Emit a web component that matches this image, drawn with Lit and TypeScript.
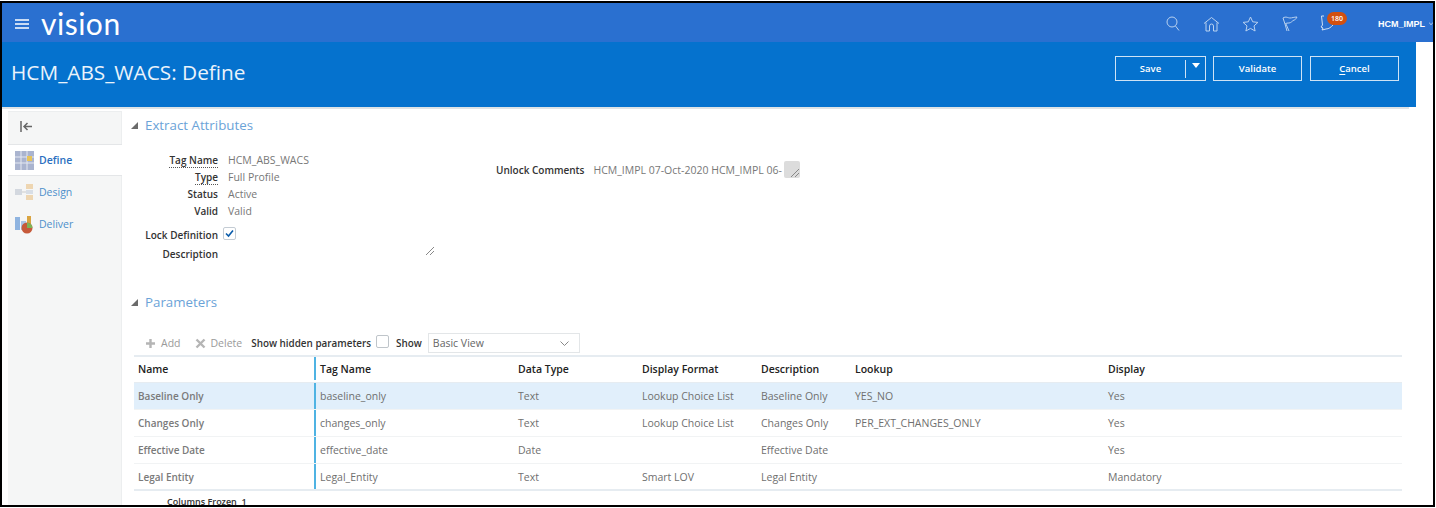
import { LitElement, css, html, svg, unsafeCSS } from 'lit'
import { customElement } from 'lit/decorators.js'

const FONT = unsafeCSS('"Open Sans", "Noto Sans", sans-serif')

const columns = [
  { label: 'Name', key: 'name' },
  { label: 'Tag Name', key: 'tag' },
  { label: 'Data Type', key: 'type' },
  { label: 'Display Format', key: 'format' },
  { label: 'Description', key: 'desc' },
  { label: 'Lookup', key: 'lookup' },
  { label: 'Display', key: 'display' }
]

const rows: Record<string, string>[] = [
  { name: 'Baseline Only', tag: 'baseline_only', type: 'Text', format: 'Lookup Choice List', desc: 'Baseline Only', lookup: 'YES_NO', display: 'Yes' },
  { name: 'Changes Only', tag: 'changes_only', type: 'Text', format: 'Lookup Choice List', desc: 'Changes Only', lookup: 'PER_EXT_CHANGES_ONLY', display: 'Yes' },
  { name: 'Effective Date', tag: 'effective_date', type: 'Date', format: '', desc: 'Effective Date', lookup: '', display: 'Yes' },
  { name: 'Legal Entity', tag: 'Legal_Entity', type: 'Text', format: 'Smart LOV', desc: 'Legal Entity', lookup: '', display: 'Mandatory' }
]

const attrs = [
  { label: 'Tag Name', value: 'HCM_ABS_WACS', dotted: true },
  { label: 'Type', value: 'Full Profile', dotted: true },
  { label: 'Status', value: 'Active', dotted: false },
  { label: 'Valid', value: 'Valid', dotted: false }
]

const grip = svg`<path d="M0 8 8 0M4 8 8 4" stroke="#888" stroke-width="1" fill="none"/>`

@customElement('app-root')
export class AppRoot extends LitElement {
  static styles = css`
    :host {
      display: block;
      width: 1436px;
      height: 508px;
      overflow: hidden;
      background: #fff;
      font-family: ${FONT};
      font-size: 10.5px;
    }
    .frame {
      box-sizing: border-box;
      width: 1435px;
      height: 506px;
      margin-top: 1px;
      overflow: hidden;
      border: 2px solid #000;
      background: #fff;
    }
    .topbar {
      height: 39px;
      background: #2a70d0;
      display: flex;
      align-items: center;
      color: #fff;
      box-sizing: border-box;
      padding-left: 13px;
    }
    .menu { width: 14px; height: 12px; margin-top: 2px; }
    .logo {
      font-size: 30px;
      line-height: 39px;
      margin: 1px 0 0 12px;
      letter-spacing: 0.5px;
      font-family: Lato, sans-serif;
      font-weight: 400;
    }
    .top-icons {
      margin-left: auto;
      display: flex;
      align-items: center;
      padding-top: 2px;
    }
    .top-icons svg { display: block; }
    .notify { position: relative; }
    .badge {
      position: absolute;
      left: 7px;
      top: -3px;
      width: 20px;
      height: 13px;
      border-radius: 7px;
      background: #d2500f;
      color: #fff;
      font-size: 7px;
      font-weight: 600;
      line-height: 13px;
      text-align: center;
    }
    .user {
      font-size: 9px;
      font-weight: 700;
      font-family: "Liberation Sans", sans-serif;
      margin: 1px 0 0 41px;
      display: flex;
      align-items: center;
      width: 55px;
      gap: 4px;
      white-space: nowrap;
    }
    .band {
      width: 1414px;
      height: 65px;
      background: #0572ce;
      display: flex;
      align-items: flex-start;
      box-sizing: border-box;
      padding: 15px 17px 0 9px;
      color: #fff;
    }
    .band h1 {
      margin: 0;
      font-size: 20.8px;
      line-height: 31px;
      font-weight: 400;
      color: #eaf3fb;
    }
    .actions { margin: -1px 0 0 auto; display: flex; gap: 8px; }
    .btn {
      box-sizing: border-box;
      height: 25px;
      border: 1px solid #cfe3f5;
      color: #fff;
      font-size: 9.5px;
      font-weight: 600;
      display: flex;
      align-items: center;
      justify-content: center;
      width: 89px;
    }
    .btn u { text-underline-offset: 2px; }
    .split { width: 91px; justify-content: flex-start; margin-right: -1px; }
    .split .label-part { width: 69px; text-align: center; }
    .split .arrow {
      flex: 1;
      height: 18px;
      border-left: 1px solid #cfe3f5;
      display: flex;
      align-items: flex-start;
      justify-content: center;
      padding-top: 3px;
      box-sizing: border-box;
    }
    .tri {
      width: 0;
      height: 0;
      border: 4px solid transparent;
      border-top: 5px solid #fff;
      border-bottom: 0;
    }
    .body {
      display: flex;
      height: 400px;
      padding-left: 6px;
      padding-top: 2px;
      border-top: 2px solid #dfe3e6;
      width: 1407px;
      box-sizing: border-box;
    }
    .side {
      width: 114px;
      flex: none;
      background: #f5f6f6;
      border-top: 1px solid #eceeef;
      border-right: 1px solid #eceeef;
      box-sizing: border-box;
    }
    .collapse {
      height: 32px;
      display: flex;
      align-items: center;
      padding: 0 0 3px 12px;
      box-sizing: border-box;
    }
    .nav {
      height: 32px;
      display: flex;
      align-items: center;
      gap: 5px;
      padding-left: 7px;
      color: #4d8fcb;
      font-size: 10.5px;
    }
    .nav.active {
      background: #fff;
      color: #2a6fc0;
      font-weight: 600;
      border-top: 1px solid #e4e6e8;
      border-bottom: 1px solid #e4e6e8;
      box-sizing: border-box;
      width: 114px;
    }
    .content {
      flex: 1;
      min-width: 0;
      padding-left: 9px;
      box-sizing: border-box;
      color: #333;
    }
    .section {
      display: flex;
      align-items: center;
      gap: 6px;
      color: #6ba3d8;
      font-size: 13.3px;
      height: 20px;
      font-weight: 400;
    }
    .section.first { margin-top: 4px; }
    .caret {
      width: 0;
      height: 0;
      margin-right: 1px;
      border-style: solid;
      border-width: 0 0 7px 7px;
      border-color: transparent transparent #6b6b6b transparent;
    }
    .attrs {
      display: flex;
      height: 157px;
    }
    .form {
      width: 306px;
      padding-top: 16px;
      position: relative;
      flex: none;
    }
    .row {
      display: flex;
      height: 17px;
      align-items: center;
    }
    .label {
      width: 87px;
      text-align: right;
      font-size: 10px;
      font-weight: 600;
      color: #333;
      flex: none;
      white-space: nowrap;
    }
    .label.dotted span { border-bottom: 1px dotted #555; }
    .value { margin-left: 10px; color: #777; }
    .lock { margin-top: 6px; height: 19px; }
    .check {
      width: 11px;
      height: 11px;
      margin: -3px 0 0 5px;
      border: 1px solid #c4ccd4;
      border-radius: 2px;
      background: #fff;
      display: block;
    }
    .desc { margin-top: 1px; }
    .resize { position: absolute; left: 295px; top: 112px; }
    .unlock {
      display: flex;
      align-items: center;
      height: 17px;
      margin-top: 26px;
      margin-left: 59px;
    }
    .unlock .label { width: auto; }
    .unlock .value { margin-left: 9px; white-space: nowrap; }
    .ta {
      width: 16px;
      height: 17px;
      background: #dcdcdc;
      border-radius: 2px;
      position: relative;
      margin-left: 2px;
    }
    .ta svg { position: absolute; right: 1px; bottom: 1px; }
    .toolbar {
      display: flex;
      align-items: center;
      height: 24px;
      margin-top: 19px;
      padding-left: 14px;
      color: #333;
    }
    .tool {
      display: flex;
      align-items: center;
      gap: 5px;
      color: #9a9a9a;
    }
    .tool + .tool { margin-left: 14px; }
    .hidden { margin-left: 9px; font-size: 9.9px; font-weight: 600; }
    .box {
      width: 11px;
      height: 11px;
      border: 1px solid #bfc5ca;
      border-radius: 2px;
      margin: -4px 0 0 5px;
    }
    .show { margin-left: 7px; font-size: 9.9px; font-weight: 600; }
    .select {
      width: 152px;
      height: 20px;
      box-sizing: border-box;
      border: 1px solid #e3e6e8;
      margin-left: 6px;
      padding: 0 10px 0 4px;
      display: flex;
      align-items: center;
      justify-content: space-between;
      color: #666;
    }
    .grid {
      margin-left: 3px;
      width: 1268px;
      border-top: 2px solid #e6ecf1;
    }
    .tr {
      display: grid;
      grid-template-columns: 182px 198px 124px 119px 94px 253px 1fr;
      height: 27px;
      align-items: center;
      border-bottom: 1px solid #f1f3f4;
      box-sizing: border-box;
      color: #6f6f6f;
    }
    .tr.head { height: 26px; padding-bottom: 2px; color: #222; border-bottom: 1px solid #e6ecf1; }
    .tr.sel { background: #e1effb; }
    .tr.last { border-bottom: 2px solid #e6ecf1; }
    .cell { padding-left: 4px; white-space: nowrap; font-weight: 600; }
    .tr:not(.head) .cell { font-weight: 400; }
    .tr:not(.head) .cell:first-child { font-size: 10px; font-weight: 600; color: #7a7a7a; }
    .tr .cell:first-child {
      align-self: stretch;
      display: flex;
      align-items: center;
      border-right: 2px solid #4fb3e3;
      box-sizing: border-box;
    }
    .frozen {
      margin: 4px 0 0 36px;
      font-size: 9px;
      color: #333;
      font-weight: 600;
    }
  `

  render () {
    return html`
      <div class="frame">
        <div class="topbar">
          <svg class="menu" viewBox="0 0 14 12"><path d="M0 2h14M0 6h14M0 10h14" stroke="#fff" stroke-width="1.3"/></svg>
          <span class="logo">vision</span>
          <div class="top-icons">
            <svg width="16" height="17" viewBox="0 0 16 17" fill="none" stroke="#b9d2f0" stroke-width="1"><circle cx="7" cy="7" r="5"/><path d="M10.500 11 14 15.500"/></svg>
            <svg style="margin-left:22px" width="17" height="16" viewBox="0 0 17 16" fill="none" stroke="#b9d2f0" stroke-width="1"><path d="M1 7.500 8.500 1.500 16 7.500M3 6.500V15h3.500V10a2 2 0 0 1 4 0v5H14V6.500"/></svg>
            <svg style="margin-left:22px" width="17" height="16" viewBox="0 0 17 16" fill="none" stroke="#b9d2f0" stroke-width="1"><path d="m8.500 1 2.200 4.800 5.200.6-3.900 3.500 1.100 5.100-4.600-2.600-4.600 2.600 1.100-5.100L1.100 6.400l5.200-.6z"/></svg>
            <svg style="margin-left:23px" width="16" height="17" viewBox="0 0 16 17" fill="none" stroke="#b9d2f0" stroke-width="1"><path d="M5 16 3 9 1 3c3-2 5 0 7 0s4-1 7-1c-1 2-2 3-3 3-2 1-3 3-5 3-1 0-3 0-4 1M4 9l3 7"/></svg>
            <div class="notify" style="margin-left:22px">
              <svg style="display:block" width="17" height="18" viewBox="0 0 17 18" fill="none" stroke="#cfe0f5" stroke-width="1"><path d="M4 1H1.500l1 9-1.500 2 2 1-1 2 4-1c3 0 5-2 7-4"/></svg>
              <span class="badge">180</span>
            </div>
            <span class="user">HCM_IMPL <svg width="5" height="4" viewBox="0 0 5 4" fill="none" stroke="#cfe0f5"><path d="m0 0 2.500 3L5 0"/></svg></span>
          </div>
        </div>
        <div class="band">
          <h1>HCM_ABS_WACS: Define</h1>
          <div class="actions">
            <div class="btn split"><span class="label-part">Save</span><span class="arrow"><span class="tri"></span></span></div>
            <div class="btn">Validate</div>
            <div class="btn"><span><u>C</u>ancel</span></div>
          </div>
        </div>
        <div class="body">
          <aside class="side">
            <div class="collapse">
              <svg width="13" height="11" viewBox="0 0 13 11" fill="none" stroke="#666" stroke-width="1.500"><path d="M1 0v11M12 5.500H4M7.500 2 4 5.500 7.500 9"/></svg>
            </div>
            <div class="nav active">
              <svg width="19" height="19" viewBox="0 0 19 19"><rect width="19" height="19" fill="#aab4cf"/><path d="M0 6h19M0 12h19M6 0v19M12 0v19" stroke="#e4e8f2"/><rect x="12" y="5" width="5" height="5" fill="#e6c35c"/></svg>
              Define
            </div>
            <div class="nav">
              <svg width="19" height="18" viewBox="0 0 19 18"><rect x="0" y="6" width="7" height="6" fill="#d3d8df"/><rect x="11" y="1" width="7" height="5" fill="#eed6b2"/><rect x="11" y="7" width="7" height="4" fill="#d8dee6"/><rect x="11" y="12" width="7" height="5" fill="#eed6b2"/><path d="M7 9h4" stroke="#ccc"/></svg>
              Design
            </div>
            <div class="nav">
              <svg width="19" height="19" viewBox="0 0 19 19"><rect x="0" y="2" width="5" height="13" fill="#8fb4e0"/><rect x="6" y="6" width="5" height="9" fill="#a9c4e6"/><rect x="12" y="1" width="4" height="8" fill="#d9a441"/><circle cx="12" cy="13" r="5.500" fill="#c65a3a"/><path d="M12 13V7.500a5.500 5.500 0 0 1 5.500 5.500z" fill="#7fb356"/></svg>
              Deliver
            </div>
          </aside>
          <div class="content">
            <div class="section first"><span class="caret"></span>Extract Attributes</div>
            <div class="attrs">
              <div class="form">
                ${attrs.map(a => html`
                  <div class="row">
                    <div class="label ${a.dotted ? 'dotted' : ''}"><span>${a.label}</span></div>
                    <div class="value">${a.value}</div>
                  </div>
                `)}
                <div class="row lock">
                  <div class="label">Lock Definition</div>
                  <svg class="check" viewBox="0 0 11 11" fill="none"><path d="m2 5.500 2.500 2.500L9 2.500" stroke="#0a5cab" stroke-width="1.600"/></svg>
                </div>
                <div class="row desc"><div class="label">Description</div></div>
                <svg class="resize" width="8" height="8" viewBox="0 0 8 8">${grip}</svg>
              </div>
              <div class="unlock">
                <div class="label">Unlock Comments</div>
                <div class="value">HCM_IMPL 07-Oct-2020 HCM_IMPL 06-</div>
                <div class="ta"><svg width="8" height="8" viewBox="0 0 8 8">${grip}</svg></div>
              </div>
            </div>
            <div class="params">
              <div class="section"><span class="caret"></span>Parameters</div>
              <div class="toolbar">
                <span class="tool">
                  <svg width="11" height="11" viewBox="0 0 11 11"><path d="M5.500 1v9M1 5.500h9" stroke="#b5b5b5" stroke-width="2.400"/></svg>
                  Add
                </span>
                <span class="tool">
                  <svg width="11" height="11" viewBox="0 0 11 11"><path d="m1.500 1.500 8 8M9.500 1.500l-8 8" stroke="#b5b5b5" stroke-width="2.400"/></svg>
                  Delete
                </span>
                <span class="hidden">Show hidden parameters</span>
                <span class="box"></span>
                <span class="show">Show</span>
                <div class="select">Basic View
                  <svg width="9" height="5" viewBox="0 0 9 5" fill="none" stroke="#888"><path d="m.500.500 4 4 4-4"/></svg>
                </div>
              </div>
              <div class="grid">
                <div class="tr head">${columns.map(c => html`<div class="cell">${c.label}</div>`)}</div>
                ${rows.map((r, i) => html`
                  <div class="tr ${i === 0 ? 'sel' : ''} ${i === rows.length - 1 ? 'last' : ''}">
                    ${columns.map(c => html`<div class="cell">${r[c.key]}</div>`)}
                  </div>
                `)}
              </div>
              <div class="frozen">Columns Frozen&nbsp;&nbsp;1</div>
            </div>
          </div>
        </div>
      </div>
    `
  }
}
